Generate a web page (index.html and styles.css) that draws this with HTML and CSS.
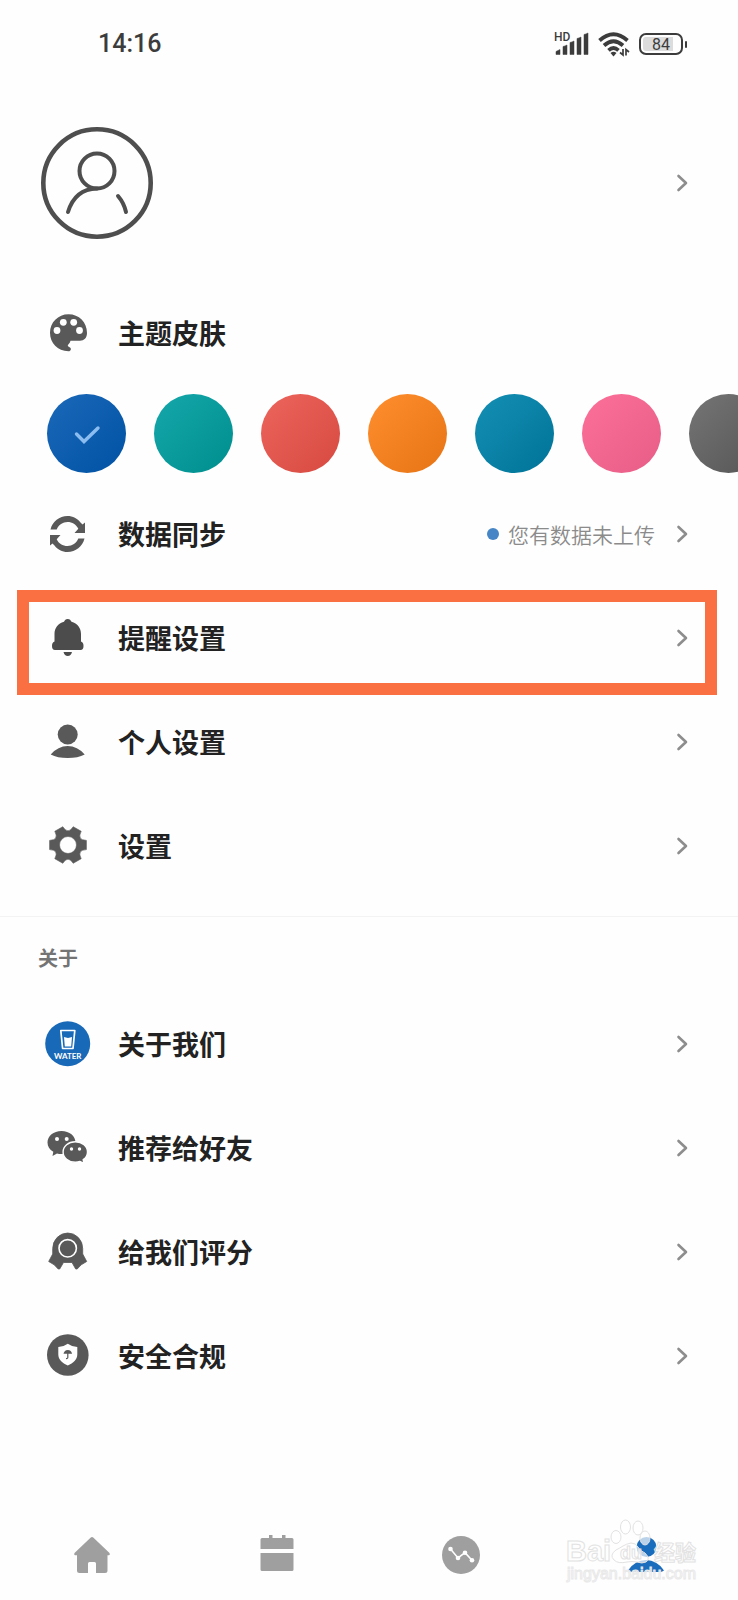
FILE: index.html
```html
<!DOCTYPE html>
<html lang="zh-CN">
<head>
<meta charset="utf-8">
<meta name="viewport" content="width=device-width, initial-scale=1">
<title>个人中心</title>
<link rel="stylesheet" href="styles.css">
</head>
<body>
<svg class="defs" width="0" height="0" aria-hidden="true">
  <symbol id="chevron" viewBox="0 0 12 18"><path d="M2.500 2l7.500 7-7.500 7" fill="none" stroke="currentColor" stroke-width="2.600" stroke-linecap="round" stroke-linejoin="round"/></symbol>
</svg>
<div class="page">
  <header class="status">
    <time class="clock">14:16</time>
    <div class="indicators">
      <div class="signal">
        <span class="hd">HD</span>
        <svg width="34" height="24" viewBox="0 0 34 24" aria-hidden="true"><path d="M1 22.500v-3q2-1 4-2v5zM8 22.500v-8q2-.5 4-1.500v9.500zM15 22.500v-12q2-.5 4-1.500v13.500zM22 22.500v-16q2-.5 4-1.500v17.500zM29 22.500v-20q2-.5 4-1.500v21.500z" fill="currentColor" stroke="currentColor" stroke-width=".5" stroke-linejoin="round"/></svg>
      </div>
      <svg width="34" height="26" viewBox="0 0 34 26" aria-hidden="true"><g fill="none" stroke="currentColor" stroke-width="3.800"><path d="M2.500 9.500q14-12.500 28 0"/><path d="M7 14.500q9.500-8.500 19 0"/><path d="M11.500 19.300q5-4.500 10 0"/></g><path d="M13.500 22q3-2.500 6 0l-3 3.500z" fill="currentColor"/><path d="M26 18v6l-3-2.500M29 24.500v-6l3 2.500" fill="none" stroke="currentColor" stroke-width="1.700"/></svg>
      <div class="battery"><span>84</span></div>
    </div>
  </header>

  <main>
    <a class="profile" href="#profile" aria-label="个人资料">
      <svg class="avatar" viewBox="0 0 112 112" aria-hidden="true"><g fill="none" stroke="currentColor" stroke-width="4" stroke-linecap="round"><circle cx="56" cy="56" r="53.700" stroke-width="4.600"/><circle cx="56" cy="44" r="17.500"/><path d="M27 85q7-23 29-23.500M77 69q6 7 8 16"/></g></svg>
      <svg class="chevron"><use href="#chevron"/></svg>
    </a>

    <section aria-labelledby="theme-title">
      <div class="theme-head">
        <svg class="icon" viewBox="0 0 48 48" aria-hidden="true"><path d="M24.500 42.300C13.500 42 6 34 6 23.800 6 13.500 14 5.300 24.500 5.300S43 13 43 24c0 5-3 7.700-7 7.700h-9.500q-.5 2-2 3.500c-1.500 1.300-.5 2.300 1.500 3.300 1.500.8 1 3.800-1.500 3.800z" fill="currentColor"/><g fill="#fff"><circle cx="19.300" cy="13.300" r="3.400"/><circle cx="29.700" cy="13.300" r="3.400"/><circle cx="13" cy="21.500" r="3.400"/><circle cx="35.500" cy="21.500" r="3.400"/></g></svg>
        <h2 class="label" id="theme-title">主题皮肤</h2>
      </div>
      <div class="swatches" role="radiogroup" aria-labelledby="theme-title">
        <div class="swatch"><input class="blue" type="radio" name="theme" aria-label="蓝色" checked><svg width="28" height="20" viewBox="0 0 28 20" aria-hidden="true"><path d="M3.500 10l7.500 7.500L25 4" fill="none" stroke="#8cbdf0" stroke-width="3.400" stroke-linecap="round"/></svg></div>
        <div class="swatch"><input class="teal" type="radio" name="theme" aria-label="青色"></div>
        <div class="swatch"><input class="red" type="radio" name="theme" aria-label="红色"></div>
        <div class="swatch"><input class="orange" type="radio" name="theme" aria-label="橙色"></div>
        <div class="swatch"><input class="cyan" type="radio" name="theme" aria-label="湖蓝"></div>
        <div class="swatch"><input class="pink" type="radio" name="theme" aria-label="粉色"></div>
        <div class="swatch"><input class="gray" type="radio" name="theme" aria-label="灰色"></div>
      </div>
    </section>

    <nav class="menu" aria-label="设置">
      <a class="row" href="#sync">
        <svg class="icon" viewBox="0 0 48 48" aria-hidden="true"><g fill="currentColor"><path id="sync-half" d="M6.500 19.500C8.500 11.500 15.300 6 23.500 6c5.300 0 10 2.500 13 6.500L38.500 14.500 41 12.500V23H30.500L34.300 18.800C32.300 14.500 28.300 12 23.500 12c-4.800 0-8.800 2.800-10.800 7.500z"/><use href="#sync-half" transform="rotate(180 23.500 24)"/></g></svg>
        <span class="label">数据同步</span>
        <span class="note">您有数据未上传</span>
        <svg class="chevron"><use href="#chevron"/></svg>
      </a>
      <a class="row highlighted" href="#reminders">
        <svg class="icon" viewBox="0 0 48 48" aria-hidden="true"><g fill="currentColor"><path d="M23.700 5c2 0 3 1.200 3.800 2.800 6 1.700 9.500 6.200 9.500 12.200v7.500c2 .8 2.500 2.500 2.500 4.500 0 2.500-1 4-3 4H11c-2 0-3-1.500-3-4 0-2 .5-3.700 2.500-4.500V20c0-6 3.500-10.500 9.500-12.200C20.700 6.200 21.700 5 23.700 5z"/><path d="M19.500 38h8.500q-1 4-4.250 4t-4.250-4z"/></g></svg>
        <span class="label">提醒设置</span>
        <svg class="chevron"><use href="#chevron"/></svg>
      </a>
      <a class="row" href="#personal">
        <svg class="icon" viewBox="0 0 48 48" aria-hidden="true"><g fill="currentColor"><circle cx="23.700" cy="16.500" r="10"/><path d="M6.700 36.500Q14 28 23.700 28t17 8.500Q34 40 23.700 40t-17-3.500z"/></g></svg>
        <span class="label">个人设置</span>
        <svg class="chevron"><use href="#chevron"/></svg>
      </a>
      <a class="row" href="#settings">
        <svg class="icon" viewBox="-24 -23 48 48" aria-hidden="true"><path fill="currentColor" fill-rule="evenodd" d="M18.400-4.600V4.600Q8.700 5 13.200 13.700L5.200 18.300Q0 10-5.200 18.300L-13.200 13.700Q-8.700 5-18.400 4.600V-4.600Q-8.700-5-13.200-13.700L-5.200-18.300Q0-10 5.200-18.300L13.200-13.700Q8.700-5 18.400-4.600zM8.500 0A8.500 8.500 0 1 0-8.500 0 8.500 8.500 0 1 0 8.500 0z" stroke="currentColor" stroke-width=".6" stroke-linejoin="round"/></svg>
        <span class="label">设置</span>
        <svg class="chevron"><use href="#chevron"/></svg>
      </a>
    </nav>

    <section class="about">
      <h2 class="section-title">关于</h2>
      <a class="row" href="#about">
        <svg class="icon" viewBox="0 0 48 48" aria-hidden="true"><circle cx="23.700" cy="23.700" r="22.500" fill="#1869b7"/><path d="M16.800 10.500h14l-1.800 18H18.600z" fill="none" stroke="#fff" stroke-width="1.700" stroke-linejoin="round"/><path d="M20 17l4 1 4-1-.8 9.500h-6.400z" fill="#fff"/><text x="23.700" y="38.500" text-anchor="middle" class="logo-text">WATER</text></svg>
        <span class="label">关于我们</span>
        <svg class="chevron"><use href="#chevron"/></svg>
      </a>
      <a class="row" href="#share">
        <svg class="icon" viewBox="0 0 48 48" aria-hidden="true"><path d="M17.500 7c8 0 14 5 14 11.500S25.500 30 17.500 30q-2.500 0-4.500-.6L8.500 32l.8-4.200C5.500 25.500 3.500 22.500 3.500 18.500 3.500 12 9.500 7 17.500 7z" fill="currentColor"/><path d="M31.300 17.700c7 0 12.200 4.500 12.200 10.200 0 3.300-1.600 6-4.300 7.800l.8 3.800-4-2q-2.200.8-4.700.8c-7 0-12.200-4.700-12.200-10.400s5.200-10.200 12.200-10.200z" fill="currentColor" stroke="#fff" stroke-width="1.400"/><g fill="#fff"><circle cx="13" cy="15" r="2"/><circle cx="22.700" cy="15" r="2"/><circle cx="27.500" cy="25" r="1.700"/><circle cx="35.500" cy="25" r="1.700"/></g></svg>
        <span class="label">推荐给好友</span>
        <svg class="chevron"><use href="#chevron"/></svg>
      </a>
      <a class="row" href="#rate">
        <svg class="icon" viewBox="0 0 48 48" aria-hidden="true"><path d="M8.700 26V20.500a15 15.500 0 0 1 30 0V26l4 7.500-5.500 3.300-4 4.200h-1.500l-3.700-6.500h-8.500L15.700 41h-1.500l-4-4.200-5.500-3.300z" fill="currentColor" stroke="currentColor" stroke-width=".8" stroke-linejoin="round"/><circle cx="23.700" cy="20.300" r="8.700" fill="none" stroke="#fff" stroke-width="1.600"/></svg>
        <span class="label">给我们评分</span>
        <svg class="chevron"><use href="#chevron"/></svg>
      </a>
      <a class="row" href="#safety">
        <svg class="icon" viewBox="0 0 48 48" aria-hidden="true"><circle cx="23.800" cy="23" r="20.800" fill="currentColor"/><path d="M23.800 11.700q4 3 9.500 3.300v7.500c0 5-4 8.500-9.500 11-5.500-2.500-9.500-6-9.500-11V15q5.500-.3 9.500-3.300z" fill="#fff"/><path d="M19.500 21.800q.8-3.800 4.300-3.800t4.300 3.800z" fill="currentColor"/><path d="M23.800 21v4.500q0 1.200-1.800 1" fill="none" stroke="currentColor" stroke-width="1.200"/></svg>
        <span class="label">安全合规</span>
        <svg class="chevron"><use href="#chevron"/></svg>
      </a>
    </section>
  </main>

  <nav class="tabs" aria-label="主导航">
    <button type="button" aria-label="首页"><svg class="icon" viewBox="0 0 48 48" aria-hidden="true"><path d="M22.500 6.700q1.500-1.200 3 0L41.500 22q1 2-.5 2.300h-1.500V39.500q0 2.500-2.500 2.500h-9V32.500q0-1.500-1.500-1.500h-5Q20 31 20 32.500V42h-8.500Q9 42 9 39.500V24.300H7Q5.500 24 6.500 22z" fill="currentColor"/></svg></button>
    <button type="button" aria-label="日历"><svg class="icon" viewBox="0 0 48 48" aria-hidden="true"><path d="M9 7h7V4h3.500v3h9.500V4h3.500v3h6.500q1.500 0 1.500 1.500V18h-33V8.500Q7.500 7 9 7zM7.500 22h33v16.500q0 1.500-1.500 1.500H9q-1.500 0-1.500-1.500z" fill="currentColor"/></svg></button>
    <button type="button" aria-label="统计"><svg class="icon" viewBox="0 0 48 48" aria-hidden="true"><circle cx="24" cy="24" r="19" fill="currentColor"/><path d="M13.500 18l7.500 9 7-5.300 7 7.600" fill="none" stroke="#fff" stroke-width="1.600"/><g fill="#fff"><circle cx="13.500" cy="18" r="2.300"/><circle cx="21" cy="27" r="2.300"/><circle cx="28" cy="21.700" r="2.300"/><circle cx="35" cy="29.300" r="2.300"/></g></svg></button>
    <button type="button" class="active" aria-label="我的" aria-current="page"><svg class="icon" viewBox="0 0 48 48" aria-hidden="true"><g fill="currentColor"><circle cx="24.500" cy="16" r="10"/><path d="M6 39.500Q13 29 24 29t18 10.500q-2 1.500-5 1.500H11q-3 0-5-1.500z"/></g></svg></button>
    <div class="watermark">
      <svg width="136" height="68" viewBox="0 0 136 68" aria-hidden="true">
        <g fill="#fff" fill-opacity=".7" stroke="#e2e2e2">
          <ellipse cx="50" cy="19" rx="5" ry="6.500"/><ellipse cx="59.500" cy="9" rx="5" ry="7"/><ellipse cx="72" cy="10" rx="5" ry="7"/><ellipse cx="79" cy="20" rx="5" ry="7"/>
          <path d="M65 25q5 0 7 4t7 6q6 6 1 9-4 2-9 0-5-1-10 0-9 2-13-2-5-5 2-10 4-2 7-4t8-3z"/>
        </g>
        <g class="mark-brand"><text x="0" y="43">Bai</text><text x="54" y="41" class="mark-small">du</text><text x="88" y="42" class="mark-cjk">经验</text></g>
        <text x="1" y="61" class="mark-url">jingyan.baidu.com</text>
      </svg>
    </div>
  </nav>
</div>
</body>
</html>
```
FILE: styles.css
```css
* { box-sizing: border-box; }

body {
  margin: 0;
  background: #fefefe;
  color: #222;
  font-family: "Noto Sans CJK SC", "Noto Sans", sans-serif;
}

.defs { position: absolute; }

.page {
  display: flex;
  flex-direction: column;
  min-height: 100vh;
  overflow-x: hidden;
}

main { flex: 1; }

a { color: inherit; text-decoration: none; }

/* status bar */
.status {
  display: flex;
  align-items: center;
  justify-content: space-between;
  height: 88px;
  padding: 0 51px 0 98px;
  color: #3c3c3c;
}

.clock { font: 500 25px/30px Roboto, sans-serif; }

.indicators { display: flex; align-items: center; gap: 8px; }

.signal { position: relative; display: flex; }

.hd {
  position: absolute;
  top: 0;
  left: -1px;
  font: 500 12px/11px Roboto, sans-serif;
}

.battery {
  position: relative;
  display: flex;
  width: 44px;
  height: 22px;
  margin-right: 4px;
  padding: 2px;
  border: 2px solid currentColor;
  border-radius: 7px;
}

.battery::after {
  content: "";
  position: absolute;
  top: 6px;
  right: -6px;
  width: 2px;
  height: 7px;
  border-radius: 1px;
  background: currentColor;
}

.battery span {
  flex: 1;
  border-radius: 3px;
  background: linear-gradient(90deg, #dcdcdc 84%, transparent 84%);
  font: 400 16px/15px Roboto, sans-serif;
  text-align: center;
}

/* profile */
.profile {
  display: flex;
  align-items: center;
  justify-content: space-between;
  height: 190px;
  padding: 0 50px 0 41px;
}

.avatar { width: 112px; height: 112px; color: #4e4e4e; }

.chevron { flex: none; width: 12px; height: 18px; color: #8d8d8d; }

.icon { flex: none; display: block; width: 48px; height: 48px; color: #595959; }

.label {
  margin: 0;
  font-size: 27px;
  line-height: 40px;
  font-weight: 700;
}

/* theme colours */
.theme-head {
  display: flex;
  align-items: center;
  gap: 26px;
  height: 110px;
  padding-left: 44px;
}

.swatches {
  display: flex;
  gap: 28px;
  padding: 6px 0 9px 47px;
  overflow: hidden;
}

.swatch { flex: none; display: grid; place-items: center; }
.swatch > * { grid-area: 1 / 1; }
.swatch svg { pointer-events: none; }

.swatch input {
  appearance: none;
  width: 79px;
  height: 79px;
  margin: 0;
  border-radius: 50%;
}

.blue { background: linear-gradient(135deg, #1b68b8, #0052a4); }
.teal { background: linear-gradient(135deg, #14a7ab, #008e8d); }
.red { background: linear-gradient(135deg, #ed655d, #d64940); }
.orange { background: linear-gradient(135deg, #ff8e2e, #e67414); }
.cyan { background: linear-gradient(135deg, #158fb4, #007398); }
.pink { background: linear-gradient(135deg, #fc7098, #e75d87); }
.gray { background: linear-gradient(135deg, #757575, #555); }

/* menu rows */
.row {
  position: relative;
  display: flex;
  align-items: center;
  height: 104px;
  padding: 0 50px 0 44px;
}

.row .label { margin: 0 auto 0 26px; }

.note {
  display: flex;
  align-items: center;
  gap: 9px;
  margin-right: 21px;
  color: #8b8b8b;
  font-size: 21px;
  line-height: 30px;
  font-weight: 350;
}

.note::before {
  content: "";
  width: 12px;
  height: 12px;
  border-radius: 50%;
  background: #4686c6;
}

.highlighted .icon { color: #4c4c4c; }

.highlighted::after {
  content: "";
  position: absolute;
  inset: 4px 21px -5px 17px;
  border: 12px solid #fa7042;
  pointer-events: none;
}

/* about */
.about { margin-top: 18px; border-top: 1px solid #f3f3f3; }

.section-title {
  margin: 0;
  padding: 26px 38px 19px;
  color: #747474;
  font-size: 20px;
  line-height: 30px;
  font-weight: 700;
}

.logo-text { fill: #fff; font: 700 8px Lato, sans-serif; }

/* tab bar */
.tabs {
  position: relative;
  display: grid;
  grid-template-columns: repeat(4, 1fr);
  height: 90px;
}

.tabs button {
  display: grid;
  place-items: center;
  padding: 0;
  border: 0;
  background: none;
}

.tabs button .icon { color: #9f9f9f; }
.tabs .active .icon { color: #1a6cbc; }

.watermark {
  position: absolute;
  right: 36px;
  bottom: 14px;
  pointer-events: none;
}

.watermark svg { display: block; overflow: visible; }

.watermark text {
  fill: #fff;
  fill-opacity: .6;
  stroke: #e2e2e2;
  stroke-width: 1px;
  font-family: "Liberation Sans", "Noto Sans CJK SC", sans-serif;
}

.mark-brand { font-size: 29px; font-weight: 700; }
.mark-small { font-size: 18px; }
.mark-cjk { font-size: 21px; }
.watermark .mark-url { font-size: 16px; stroke: #e9e9e9; }
```
